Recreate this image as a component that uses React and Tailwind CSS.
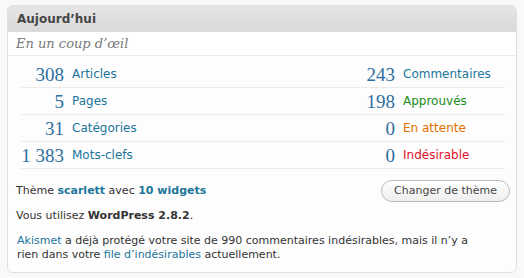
import React from 'react';

const sans = { fontFamily: '"DejaVu Sans", Verdana, sans-serif' };
const serif = { fontFamily: '"DejaVu Serif", Georgia, serif' };
const digits = { fontFamily: '"Liberation Serif", Georgia, serif' };

const leftRows = [
    { n: '308', label: 'Articles' },
    { n: '5', label: 'Pages' },
    { n: '31', label: 'Catégories' },
    { n: '1 383', label: 'Mots-clefs' },
];

const rightRows = [
    { n: '243', label: 'Commentaires', color: 'text-[#21759b]' },
    { n: '198', label: 'Approuvés', color: 'text-[#1a8c1a]' },
    { n: '0', label: 'En attente', color: 'text-[#e66f00]' },
    { n: '0', label: 'Indésirable', color: 'text-[#e0102a]' },
];

function Row({ n, label, color, numClass, labelClass, first }) {
    return (
        <div className={`flex items-center h-[27px] border-b border-[#ececec] ${first ? 'mt-[5px]' : ''}`}>
            <span className={`text-[19px] leading-none whitespace-nowrap text-[#2e6e9e] text-right ${numClass}`} style={digits}>{n}</span>
            <span className={`text-[12px] ${color || 'text-[#21759b]'} ${labelClass}`} style={sans}>{label}</span>
        </div>
    );
}

export default function App() {
    return (
        <div className="w-[524px] h-[278px] bg-[#f9f9f9] pt-[5px] pl-[7px]">
            <div className="w-[510px] h-[268px] border border-[#dfdfdf] rounded-[6px] bg-[#fdfdfd] overflow-hidden">
                {/* Header */}
                <div className="h-[26px] flex items-center px-[9px] bg-gradient-to-b from-[#e6e6e6] to-[#d9d9d9] border-b border-[#dcdcdc]">
                    <span className="text-[12px] font-bold text-[#464646]" style={sans}>Aujourd’hui</span>
                </div>

                <div className="h-[24px] flex items-center px-[8px] bg-white border-b border-[#ececec]">
                    <span className="text-[13px] italic text-[#777]" style={serif}>En un coup d’œil</span>
                </div>

                {/* Stats */}
                <div className="flex pl-[13px] pr-[11px]">
                    <div className="w-[242px]">
                        {leftRows.map((r, i) => (
                            <Row key={r.label} {...r} first={i === 0} numClass="w-[43px]" labelClass="pl-[8px]" />
                        ))}
                    </div>
                    <div className="flex-1">
                        {rightRows.map((r, i) => (
                            <Row key={r.label} {...r} first={i === 0} numClass="flex-1" labelClass="w-[110px] pl-[8px]" />
                        ))}
                    </div>
                </div>

                {/* Theme */}
                <div className="flex items-center justify-between pl-[8px] pr-[6px] mt-[11px]" style={sans}>
                    <span className="text-[11px] text-[#333]">
                        Thème <b className="text-[#21759b]">scarlett</b> avec <b className="text-[#21759b]">10 widgets</b>
                    </span>
                    <button className="h-[22px] px-[12px] rounded-full border border-[#bbb] bg-gradient-to-b from-[#fff] to-[#eee] text-[11px] text-[#464646]">
                        Changer de thème
                    </button>
                </div>

                <p className="text-[11px] text-[#333] px-[8px] mt-[6px]" style={sans}>
                    Vous utilisez <b>WordPress 2.8.2</b>.
                </p>

                <p className="text-[11px] leading-[14px] text-[#333] pl-[9px] pr-[24px] mt-[9px]" style={sans}>
                    <span className="text-[#21759b]">Akismet</span> a déjà protégé votre site de 990 commentaires indésirables, mais il n’y a rien dans votre <span className="text-[#21759b]">file d’indésirables</span> actuellement.
                </p>
            </div>
        </div>
    );
}
